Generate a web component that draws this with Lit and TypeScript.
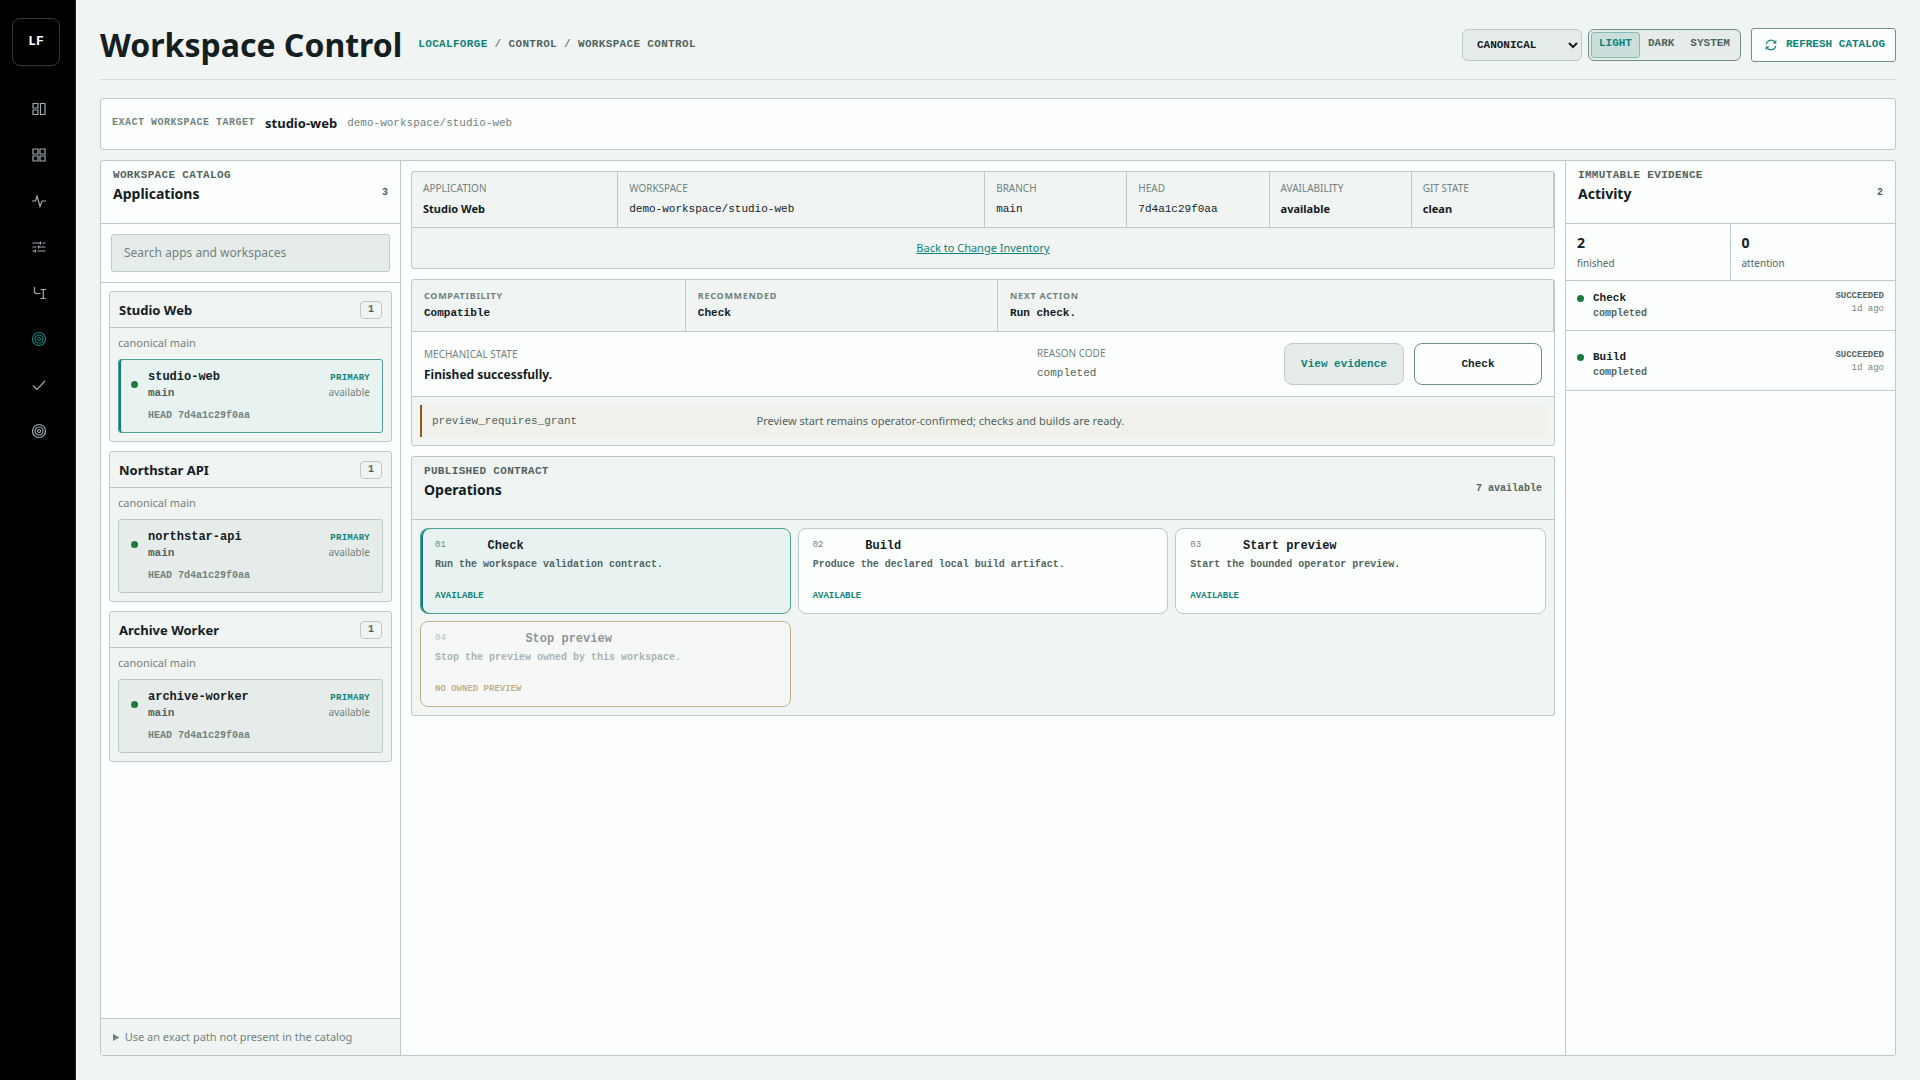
import { LitElement, html, css, svg } from "lit";
import { customElement, state } from "lit/decorators.js";
import { classMap } from "lit/directives/class-map.js";

const icons = {
  board: svg`<path d="M2 2.500h5v4.500h-5zM2 9h5v4.500h-5zM9.500 2.500h4.500v11h-4.500z"/>`,
  grid: svg`<path d="M2 2h5v5H2zM9 2h5v5H9zM2 9h5v5H2zM9 9h5v5H9z"/>`,
  pulse: svg`<path d="M1 8h3.500l1.500-5 3 10.500 2-5.500h4"/>`,
  sliders: svg`<path d="M1.500 4h8M11.500 4h3M1.500 8h4M7.500 8h7M1.500 12h3M6.500 12h8M9.500 2.500v3M7.500 6.500v3M4.500 10.500v3"/>`,
  branch: svg`<path d="M3.500 2v4.500a2 2 0 0 0 2 2h4M9.500 4.500h5.500M12.300 4.500v9M9.500 13.500h5.500"/>`,
  target: svg`<circle cx="8" cy="8" r="6.500"/><circle cx="8" cy="8" r="4"/><circle cx="8" cy="8" r="1.500"/>`,
  check: svg`<path d="M2 8.500l4 4 8-8.500"/>`,
  refresh: svg`<path d="M2.500 7a5.600 5.600 0 0 1 10.300-1.800M13.500 2.500v3.200h-3.200M13.500 9a5.600 5.600 0 0 1-10.300 1.800M2.500 13.500v-3.200h3.200"/>`,
};

type IconName = keyof typeof icons;

const icon = (name: IconName) => html`
  <svg class="icon" viewBox="0 0 16 16" aria-hidden="true">${icons[name]}</svg>
`;

const NAV: { label: string; icon: IconName }[] = [
  { label: "Dashboard", icon: "board" },
  { label: "Projects", icon: "grid" },
  { label: "Health", icon: "pulse" },
  { label: "Settings", icon: "sliders" },
  { label: "Changes", icon: "branch" },
  { label: "Workspace Control", icon: "target" },
  { label: "Approvals", icon: "check" },
  { label: "Targets", icon: "target" },
];

const APPS = [
  { name: "Studio Web", workspace: "studio-web" },
  { name: "Northstar API", workspace: "northstar-api" },
  { name: "Archive Worker", workspace: "archive-worker" },
];

const FACTS = [
  { term: "Application", value: "Studio Web", mono: false },
  { term: "Workspace", value: "demo-workspace/studio-web", mono: true },
  { term: "Branch", value: "main", mono: true },
  { term: "Head", value: "7d4a1c29f0aa", mono: true },
  { term: "Availability", value: "available", mono: false },
  { term: "Git state", value: "clean", mono: false },
];

const VERDICT = [
  { term: "Compatibility", value: "Compatible" },
  { term: "Recommended", value: "Check" },
  { term: "Next action", value: "Run check." },
];

const OPERATIONS = [
  { name: "Check", text: "Run the workspace validation contract.", status: "Available", enabled: true },
  { name: "Build", text: "Produce the declared local build artifact.", status: "Available", enabled: true },
  { name: "Start preview", text: "Start the bounded operator preview.", status: "Available", enabled: true },
  { name: "Stop preview", text: "Stop the preview owned by this workspace.", status: "No owned preview", enabled: false },
];

const EVENTS = [
  { name: "Check", result: "completed", status: "Succeeded", age: "1d ago" },
  { name: "Build", result: "completed", status: "Succeeded", age: "1d ago" },
];

@customElement("app-root")
export class AppRoot extends LitElement {
  @state() private theme = "Light";
  @state() private workspace = "studio-web";
  @state() private operation = "Check";

  static styles = css`
    :host {
      --bg: #f0f4f3;
      --panel: #fcfffe;
      --raised: #e6ecea;
      --line: #bccbc8;
      --line-strong: #6f918a;
      --text: #14201f;
      --soft: #52645f;
      --muted: #71837f;
      --accent: #0f8278;
      --accent-soft: #e8f3f1;
      --ok: #1b7a40;
      --warn: #8f5d0a;
      --sans: "Noto Sans", sans-serif;
      --mono: "Liberation Mono", monospace;
      display: grid;
      grid-template-columns: 76px minmax(0, 1fr);
      min-height: 100vh;
      background: var(--bg);
      color: var(--text);
      font: 11px/16px var(--sans);
    }
    *,
    *::before {
      box-sizing: border-box;
    }
    h1,
    h2,
    h3,
    p,
    dl,
    dd,
    ul,
    ol {
      margin: 0;
      padding: 0;
    }
    ul,
    ol {
      list-style: none;
    }
    button,
    input,
    select {
      margin: 0;
      font: inherit;
      color: inherit;
    }
    button {
      cursor: pointer;
    }
    .icon {
      width: 16px;
      height: 16px;
      fill: none;
      stroke: currentColor;
      stroke-width: 1.2;
    }

    .rail {
      padding: 18px 10px 18px 12px;
      background: #000;
      border-right: 1px solid #1c2422;
    }
    .logo {
      display: grid;
      place-items: center;
      width: 48px;
      height: 48px;
      margin-bottom: 22px;
      border: 1px solid #333a38;
      border-radius: 8px;
      color: #fff;
      font: bold 13px/16px var(--mono);
      text-decoration: none;
    }
    .nav-link {
      display: grid;
      place-items: center;
      height: 41px;
      margin-bottom: 5px;
      color: #a3abb5;
    }
    .nav-link.current {
      color: var(--accent);
    }

    .page {
      display: flex;
      flex-direction: column;
      min-width: 0;
      padding: 0 24px 24px;
    }
    .top {
      display: flex;
      align-items: center;
      height: 80px;
      padding-top: 10px;
      border-bottom: 1px solid #d6dedc;
    }
    .title {
      font-size: 32px;
      line-height: 40px;
    }
    .crumbs {
      display: flex;
      gap: 7px;
      margin-left: 16px;
      padding-bottom: 2px;
      color: var(--soft);
      font: bold 11px/16px var(--mono);
      letter-spacing: 0.03em;
      text-transform: uppercase;
    }
    .crumbs a {
      color: var(--accent);
      text-decoration: none;
    }
    .slash {
      font-weight: normal;
    }
    .tools {
      display: flex;
      align-items: center;
      margin-left: auto;
      font: bold 11px/16px var(--mono);
      text-transform: uppercase;
    }
    .scope {
      width: 120px;
      height: 32px;
      padding: 0 0 0 10px;
      border: 1px solid var(--line);
      border-radius: 6px;
      background: var(--raised);
      text-transform: uppercase;
    }
    .themes {
      display: flex;
      height: 32px;
      margin: 0 10px 0 6px;
      padding: 2px;
      border: 1px solid var(--line-strong);
      border-radius: 6px;
      background: var(--raised);
    }
    .theme {
      padding: 0 7px 4px;
      border: 1px solid transparent;
      border-radius: 3px;
      background: none;
      color: var(--soft);
      text-transform: uppercase;
    }
    .theme.on {
      border-color: #86bab4;
      background: #cadfdc;
      color: var(--accent);
    }
    .refresh {
      display: flex;
      align-items: center;
      gap: 8px;
      height: 34px;
      padding: 0 10px 0 12px;
      border: 1px solid var(--line-strong);
      border-radius: 3px;
      background: var(--panel);
      color: var(--accent);
      text-transform: uppercase;
    }
    .refresh-text {
      padding-bottom: 2px;
    }
    .refresh .icon {
      width: 14px;
      height: 14px;
    }

    .target {
      display: flex;
      align-items: center;
      gap: 10px;
      min-height: 52px;
      margin: 18px 0 10px;
      padding: 0 11px 2px;
      border: 1px solid var(--line);
      border-radius: 3px;
      background: var(--panel);
    }
    .target-label {
      color: var(--muted);
      font: bold 10px/16px var(--mono);
      letter-spacing: 0.05em;
      text-transform: uppercase;
    }
    .target-name {
      font-size: 13px;
      font-weight: bold;
    }
    .target-path {
      color: var(--muted);
      font: 11px/16px var(--mono);
    }

    .desk {
      flex: 1;
      display: grid;
      grid-template-columns: 300px minmax(0, 1fr) 330px;
      border: 1px solid var(--line);
      border-radius: 3px;
      background: var(--panel);
    }
    .head {
      display: flex;
      align-items: center;
      justify-content: space-between;
      min-height: 63px;
      padding: 0 12px;
      border-bottom: 1px solid var(--line);
    }
    .head-text {
      padding-bottom: 13px;
    }
    .eyebrow {
      color: var(--soft);
      font: bold 11px/16px var(--mono);
      letter-spacing: 0.03em;
      text-transform: uppercase;
    }
    .heading {
      font-size: 14px;
      line-height: 22px;
    }
    .count {
      padding-top: 2px;
      color: var(--soft);
      font: bold 10px/16px var(--mono);
    }

    .catalog {
      display: flex;
      flex-direction: column;
      border-right: 1px solid var(--line);
    }
    .search {
      padding: 10px;
      border-bottom: 1px solid var(--line);
    }
    .search-box {
      display: block;
      width: 100%;
      height: 38px;
      padding: 0 12px 2px;
      border: 1px solid var(--line);
      border-radius: 3px;
      background: var(--raised);
      font-size: 12px;
    }
    .search-box::placeholder {
      color: var(--muted);
    }
    .apps {
      flex: 1;
      display: flex;
      flex-direction: column;
      gap: 9px;
      padding: 8px;
    }
    .app {
      border: 1px solid var(--line);
      border-radius: 3px;
      background: var(--bg);
    }
    .app-head {
      display: flex;
      align-items: center;
      justify-content: space-between;
      height: 36px;
      padding: 0 9px;
      border-bottom: 1px solid var(--line);
    }
    .app-name {
      font-size: 13px;
      line-height: 18px;
    }
    .badge {
      width: 22px;
      height: 18px;
      border: 1px solid var(--line);
      border-radius: 4px;
      color: var(--soft);
      font: bold 10px/16px var(--mono);
      text-align: center;
    }
    .app-body {
      padding: 7px 8px 8px;
    }
    .lane {
      padding-bottom: 8px;
      color: var(--muted);
    }
    .space {
      display: grid;
      grid-template-columns: 8px minmax(0, 1fr) auto;
      column-gap: 9px;
      width: 100%;
      height: 74px;
      padding: 9px 12px 0;
      border: 1px solid var(--line);
      border-radius: 3px;
      background: var(--raised);
      text-align: left;
    }
    .space.on {
      border-color: #4f9f96;
      background: var(--accent-soft);
      box-shadow: inset 2px 0 0 var(--accent);
    }
    .dot {
      width: 7px;
      height: 7px;
      margin-top: 12px;
      border-radius: 50%;
      background: var(--ok);
    }
    .space-text,
    .space-state {
      display: flex;
      flex-direction: column;
    }
    .space-name {
      font: bold 12px/16px var(--mono);
    }
    .space-branch {
      color: var(--soft);
      font: bold 11px/17px var(--mono);
    }
    .space-sha {
      padding-top: 6px;
      color: var(--muted);
      font: bold 10px/16px var(--mono);
    }
    .space-state {
      align-items: flex-end;
      padding-top: 2px;
      color: var(--muted);
      font-size: 10px;
      line-height: 14px;
    }
    .primary {
      color: var(--accent);
      font: bold 9px/14px var(--mono);
      letter-spacing: 0.03em;
      text-transform: uppercase;
    }
    .manual {
      padding: 10px 12px;
      border-top: 1px solid var(--line);
      background: var(--bg);
      color: var(--muted);
    }

    .work {
      display: flex;
      flex-direction: column;
      gap: 10px;
      padding: 10px;
    }
    .card {
      border: 1px solid var(--line);
      border-radius: 3px;
      background: var(--bg);
    }
    .facts {
      display: grid;
      grid-template-columns: 1.45fr 2.58fr repeat(4, 1fr);
      border-bottom: 1px solid var(--line);
    }
    .fact {
      height: 55px;
      padding: 8px 11px;
      border-right: 1px solid var(--line);
    }
    .term {
      color: var(--muted);
      font-size: 10px;
      line-height: 16px;
      text-transform: uppercase;
    }
    .value {
      padding-top: 5px;
      font-weight: bold;
    }
    .value.mono {
      font: 11px/16px var(--mono);
    }
    .back {
      padding: 12px;
      text-align: center;
    }
    .back a {
      color: var(--accent);
    }
    .verdict {
      display: grid;
      grid-template-columns: 1fr 1.14fr 2.03fr;
      border-bottom: 1px solid var(--line);
    }
    .point {
      height: 51px;
      padding: 8px 12px;
      border-right: 1px solid var(--line);
    }
    .point .term {
      font-size: 9px;
      font-weight: bold;
      letter-spacing: 0.08em;
    }
    .point dd {
      padding-top: 1px;
      font: bold 11px/16px var(--mono);
    }
    .status {
      display: flex;
      align-items: center;
      height: 65px;
      padding: 0 12px;
      border-bottom: 1px solid var(--line);
      background: var(--panel);
    }
    .state {
      flex: 1;
    }
    .state-value {
      padding-top: 5px;
      font-size: 12px;
      font-weight: bold;
    }
    .reason {
      width: 247px;
      padding-bottom: 2px;
    }
    .reason-value {
      padding-top: 4px;
      color: var(--soft);
      font: 11px/16px var(--mono);
    }
    .actions {
      display: flex;
      gap: 10px;
    }
    .action {
      width: 120px;
      height: 42px;
      padding: 0;
      border: 1px solid var(--line);
      border-radius: 8px;
      background: var(--raised);
      color: var(--accent);
      font: bold 11px/16px var(--mono);
    }
    .action.run {
      width: 128px;
      border-color: var(--line-strong);
      background: var(--panel);
      color: var(--text);
    }
    .notice-row {
      padding: 8px 6px 8px 8px;
    }
    .notice {
      display: grid;
      grid-template-columns: minmax(0, 2fr) minmax(0, 5fr);
      gap: 12px;
      align-items: center;
      height: 32px;
      padding: 0 10px;
      border-left: 2px solid var(--warn);
      background: #f1f1eb;
      color: var(--soft);
    }
    .notice code {
      font: 11px/16px var(--mono);
    }

    .ops {
      display: grid;
      grid-template-columns: repeat(3, minmax(0, 1fr));
      gap: 7px;
      padding: 8px;
    }
    .op {
      display: grid;
      grid-template-columns: auto minmax(0, 1fr);
      grid-template-rows: 16px 20px 1fr;
      column-gap: 4px;
      width: 100%;
      height: 86px;
      padding: 9px 14px;
      border: 1px solid var(--line);
      border-radius: 8px;
      background: var(--panel);
      text-align: left;
      font: bold 10px/16px var(--mono);
      color: var(--soft);
    }
    .op.on {
      border-color: #4f9f96;
      background: var(--accent-soft);
      box-shadow: inset 2px 0 0 var(--accent);
    }
    .op:disabled {
      border-color: var(--warn);
      opacity: 0.45;
      cursor: default;
    }
    .op-num {
      color: var(--muted);
      font: 9px/14px var(--mono);
    }
    .op-name {
      color: var(--text);
      font: bold 12px/16px var(--mono);
    }
    .op-text {
      grid-column: 1 / -1;
      padding-top: 3px;
    }
    .op-status {
      align-self: end;
      color: var(--accent);
      font-size: 9px;
      line-height: 16px;
      text-transform: uppercase;
    }
    .op:disabled .op-status {
      color: var(--warn);
    }

    .activity {
      border-left: 1px solid var(--line);
    }
    .totals {
      display: grid;
      grid-template-columns: 1fr 1fr;
      border-bottom: 1px solid var(--line);
    }
    .total {
      height: 56px;
      padding: 9px 11px;
    }
    .total:first-child {
      border-right: 1px solid var(--line);
    }
    .total-value {
      display: block;
      font-size: 14px;
      line-height: 20px;
    }
    .total-label {
      display: block;
      color: var(--soft);
      font-size: 10px;
      line-height: 20px;
    }
    .event {
      display: grid;
      grid-template-columns: 8px minmax(0, 1fr) auto;
      column-gap: 8px;
      padding: 9px 11px 8px;
      border-bottom: 1px solid var(--line);
    }
    .event + .event {
      padding-top: 18px;
      padding-bottom: 9px;
    }
    .event .dot {
      margin-top: 5px;
    }
    .event-name {
      font: bold 11px/16px var(--mono);
    }
    .event-result {
      color: var(--soft);
      font: bold 10px/16px var(--mono);
    }
    .event-state {
      color: var(--muted);
      font: 9px/13px var(--mono);
      text-align: right;
    }
    .event-status {
      color: var(--soft);
      font-weight: bold;
      text-transform: uppercase;
    }
  `;

  private renderTop() {
    return html`
      <header class="top">
        <h1 class="title">Workspace Control</h1>
        <nav class="crumbs" aria-label="Breadcrumb">
          <a href="#home">LocalForge</a><span class="slash">/</span>
          <span>Control</span><span class="slash">/</span>
          <span>Workspace Control</span>
        </nav>
        <div class="tools">
          <select class="scope" aria-label="Scope">
            <option>Canonical</option>
          </select>
          <div class="themes" role="group" aria-label="Theme">
            ${["Light", "Dark", "System"].map(
              (name) => html`<button
                class=${classMap({ theme: true, on: this.theme === name })}
                aria-pressed=${this.theme === name}
                @click=${() => (this.theme = name)}
              >${name}</button>`
            )}
          </div>
          <button class="refresh">${icon("refresh")}<span class="refresh-text">Refresh catalog</span></button>
        </div>
      </header>
    `;
  }

  private renderCatalog() {
    return html`
      <aside class="catalog">
        <header class="head">
          <div class="head-text">
            <p class="eyebrow">Workspace catalog</p>
            <h2 class="heading">Applications</h2>
          </div>
          <span class="count">3</span>
        </header>
        <div class="search">
          <input class="search-box" type="search" aria-label="Search apps and workspaces"
            placeholder="Search apps and workspaces" />
        </div>
        <div class="apps">
          ${APPS.map(
            (app) => html`
              <section class="app">
                <header class="app-head">
                  <h3 class="app-name">${app.name}</h3>
                  <span class="badge">1</span>
                </header>
                <div class="app-body">
                  <p class="lane">canonical main</p>
                  <button
                    class=${classMap({ space: true, on: this.workspace === app.workspace })}
                    @click=${() => (this.workspace = app.workspace)}
                  >
                    <span class="dot"></span>
                    <span class="space-text">
                      <span class="space-name">${app.workspace}</span>
                      <span class="space-branch">main</span>
                      <span class="space-sha">HEAD 7d4a1c29f0aa</span>
                    </span>
                    <span class="space-state">
                      <span class="primary">Primary</span>
                      <span>available</span>
                    </span>
                  </button>
                </div>
              </section>
            `
          )}
        </div>
        <details class="manual">
          <summary>Use an exact path not present in the catalog</summary>
        </details>
      </aside>
    `;
  }

  private renderWork() {
    return html`
      <main class="work">
        <section class="card">
          <dl class="facts">
            ${FACTS.map(
              (fact) => html`<div class="fact">
                <dt class="term">${fact.term}</dt>
                <dd class=${classMap({ value: true, mono: fact.mono })}>${fact.value}</dd>
              </div>`
            )}
          </dl>
          <p class="back"><a href="#changes">Back to Change Inventory</a></p>
        </section>

        <section class="card">
          <dl class="verdict">
            ${VERDICT.map(
              (point) => html`<div class="point">
                <dt class="term">${point.term}</dt>
                <dd>${point.value}</dd>
              </div>`
            )}
          </dl>
          <div class="status">
            <div class="state">
              <p class="term">Mechanical state</p>
              <p class="state-value">Finished successfully.</p>
            </div>
            <div class="reason">
              <p class="term">Reason code</p>
              <p class="reason-value">completed</p>
            </div>
            <div class="actions">
              <button class="action">View evidence</button>
              <button class="action run">Check</button>
            </div>
          </div>
          <div class="notice-row">
            <div class="notice">
              <code>preview_requires_grant</code>
              <span>Preview start remains operator-confirmed; checks and builds are ready.</span>
            </div>
          </div>
        </section>

        <section class="card">
          <header class="head">
            <div class="head-text">
              <p class="eyebrow">Published contract</p>
              <h2 class="heading">Operations</h2>
            </div>
            <span class="count">7 available</span>
          </header>
          <div class="ops">
            ${OPERATIONS.map(
              (op, index) => html`<button
                class=${classMap({ op: true, on: this.operation === op.name })}
                ?disabled=${!op.enabled}
                @click=${() => (this.operation = op.name)}
              >
                <span class="op-num">0${index + 1}</span>
                <span class="op-name">${op.name}</span>
                <span class="op-text">${op.text}</span>
                <span class="op-status">${op.status}</span>
              </button>`
            )}
          </div>
        </section>
      </main>
    `;
  }

  private renderActivity() {
    return html`
      <aside class="activity">
        <header class="head">
          <div class="head-text">
            <p class="eyebrow">Immutable evidence</p>
            <h2 class="heading">Activity</h2>
          </div>
          <span class="count">2</span>
        </header>
        <div class="totals">
          <p class="total"><strong class="total-value">2</strong><span class="total-label">finished</span></p>
          <p class="total"><strong class="total-value">0</strong><span class="total-label">attention</span></p>
        </div>
        <ol>
          ${EVENTS.map(
            (event) => html`<li class="event">
              <span class="dot"></span>
              <div>
                <p class="event-name">${event.name}</p>
                <p class="event-result">${event.result}</p>
              </div>
              <div class="event-state">
                <p class="event-status">${event.status}</p>
                <p>${event.age}</p>
              </div>
            </li>`
          )}
        </ol>
      </aside>
    `;
  }

  render() {
    return html`
      <nav class="rail" aria-label="Main">
        <a class="logo" href="#home">LF</a>
        ${NAV.map(
          (item) => html`<a
            class=${classMap({ "nav-link": true, current: item.label === "Workspace Control" })}
            href="#${item.icon}"
            aria-label=${item.label}
          >${icon(item.icon)}</a>`
        )}
      </nav>
      <div class="page">
        ${this.renderTop()}
        <section class="target">
          <span class="target-label">Exact workspace target</span>
          <strong class="target-name">studio-web</strong>
          <span class="target-path">demo-workspace/studio-web</span>
        </section>
        <div class="desk">${this.renderCatalog()} ${this.renderWork()} ${this.renderActivity()}</div>
      </div>
    `;
  }
}
